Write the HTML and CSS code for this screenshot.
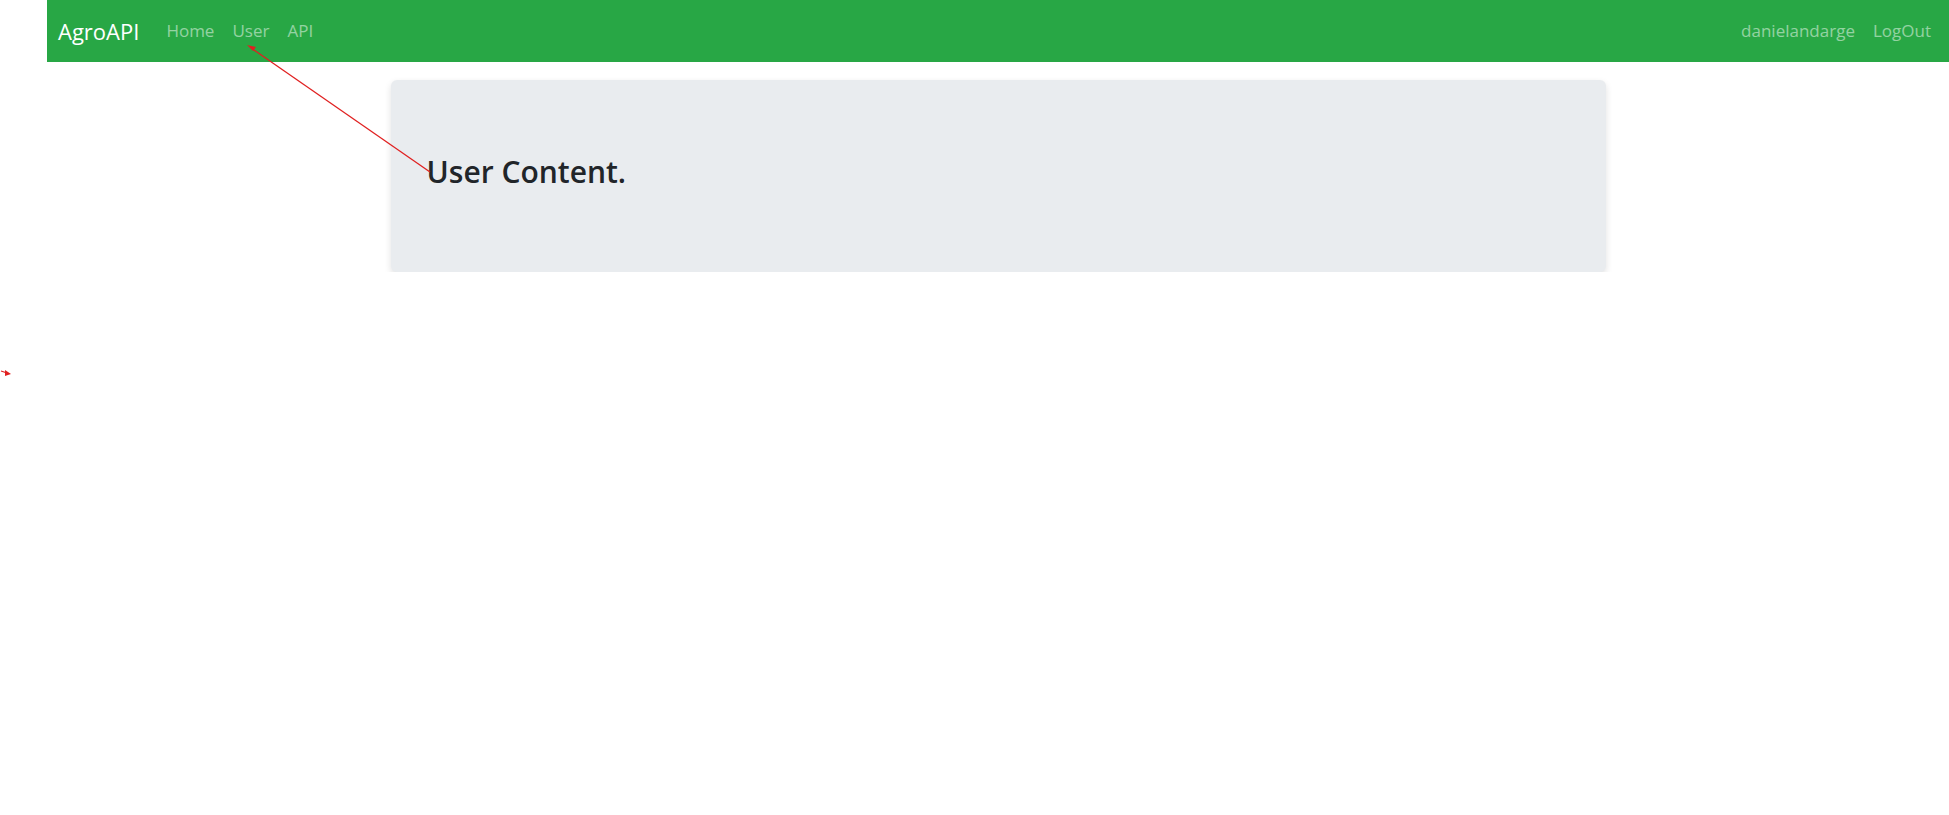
FILE: index.html
```html
<!DOCTYPE html>
<html lang="en">
<head>
<meta charset="utf-8">
<title>AgroAPI</title>
<link rel="stylesheet" href="styles.css">
</head>
<body>
<div class="page">
  <nav class="navbar">
    <a class="brand" href="#">AgroAPI</a>
    <ul class="nav">
      <li><a class="nav-link" href="#">Home</a></li>
      <li><a class="nav-link" href="#">User</a></li>
      <li><a class="nav-link" href="#">API</a></li>
    </ul>
    <ul class="nav nav-right">
      <li><a class="nav-link" href="#">danielandarge</a></li>
      <li><a class="nav-link" href="#">LogOut</a></li>
    </ul>
  </nav>
  <main class="main">
    <div class="jumbotron">
      <h2 class="title">User Content.</h2>
    </div>
  </main>
</div>
<svg class="annotation" width="1949" height="815" viewBox="0 0 1949 815">
  <line x1="430" y1="172" x2="251" y2="48" stroke="#e02020" stroke-width="1.3"/>
  <polygon points="247,45 256,47 253,51" fill="#e02020"/>
  <line x1="1" y1="371" x2="7" y2="373" stroke="#e02020" stroke-width="1.3"/>
  <polygon points="11,374 5,370 5,376" fill="#e02020"/>
</svg>
</body>
</html>
```
FILE: styles.css
```css
html, body {
  margin: 0;
  padding: 0;
  background: #fff;
}
body {
  font-family: "Open Sans", "Noto Sans", "Liberation Sans", sans-serif;
  color: #212529;
}
.page {
  padding-left: 47px;
}
.navbar {
  display: flex;
  align-items: center;
  height: 62px;
  padding: 0 9px 0 11px;
  background: #28a745;
  box-sizing: border-box;
}
.brand {
  color: #fff;
  font-size: 22px;
  text-decoration: none;
  margin-right: 18px;
  line-height: 32px;
}
.nav {
  display: flex;
  list-style: none;
  margin: 0;
  padding: 0;
}
.nav-right {
  margin-left: auto;
}
.nav-link {
  display: block;
  padding: 8px 9px;
  font-size: 17px;
  line-height: 26px;
  color: rgba(255, 255, 255, 0.5);
  text-decoration: none;
}
.main {
  display: flex;
  justify-content: center;
  padding-top: 18px;
}
.jumbotron {
  width: 1215px;
  height: 192px;
  box-sizing: border-box;
  padding: 73px 36px 0;
  background: #e9ecef;
  border-radius: 6px;
  box-shadow: 0 3px 7px rgba(0, 0, 0, 0.12);
}
.title {
  margin: 0;
  font-size: 30px;
  font-weight: 600;
  line-height: 38px;
  color: #212529;
}
.annotation {
  position: absolute;
  left: 0;
  top: 0;
  pointer-events: none;
}
```
